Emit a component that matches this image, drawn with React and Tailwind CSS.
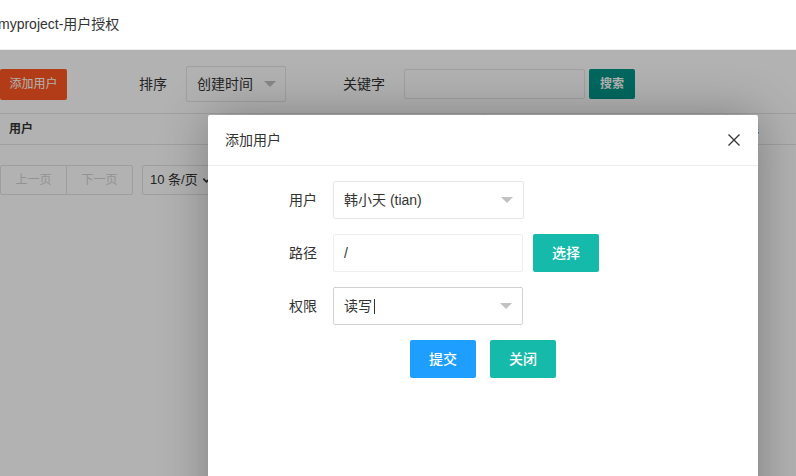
import { ChevronDown } from "lucide-react";

const FONT = "font-['Liberation_Sans','Noto_Sans_CJK_SC',sans-serif]";

function Caret() {
  return (
    <span className="block w-0 h-0 border-x-[6px] border-x-transparent border-t-[6px] border-t-[#c2c2c2]" />
  );
}

function Background() {
  return (
    <div className="text-[#333]">
      {/* toolbar */}
      <div className="flex items-center h-[36px] mt-[16px]">
        <button className="h-[31px] w-[67px] bg-[#FF5722] text-white text-[12px] rounded-[2px]">添加用户</button>
        <span className="ml-[72px] text-[14px]">排序</span>
        <div className="ml-[19px] w-[100px] h-[36px] border border-[#e6e6e6] rounded-[2px] flex items-center justify-between pl-[10px] pr-[9px] text-[14px]">
          <span>创建时间</span>
          <Caret />
        </div>
        <span className="ml-[57px] text-[14px]">关键字</span>
        <div className="ml-[19px] w-[181px] h-[30px] border border-[#e6e6e6] rounded-[2px]" />
        <button className="ml-[4px] w-[46px] h-[30px] bg-[#009688] text-white text-[12px] font-bold rounded-[2px]">搜索</button>
      </div>

      {/* table header */}
      <div className="mt-[11px] flex h-[32px] border-y border-[#e6e6e6] text-[12px] font-bold">
        <div className="w-[483px] flex items-center pl-[9px]">用户</div>
        <div className="w-[243px] flex items-center pl-[15px] border-l border-[#e6e6e6]">路径</div>
        <div className="flex-1 flex items-center pl-[8px] border-l border-[#e6e6e6]">权限</div>
      </div>

      {/* pagination */}
      <div className="mt-[20px] flex items-center text-[12px]">
        <div className="flex h-[30px] border border-[#e2e2e2] rounded-[2px]">
          <span className="w-[65px] flex items-center justify-center text-[#d2d2d2]">上一页</span>
          <span className="w-[66px] flex items-center justify-center text-[#d2d2d2] border-l border-[#e2e2e2]">下一页</span>
        </div>
        <div className="ml-[9px] h-[30px] w-[90px] border border-[#e2e2e2] rounded-[2px] flex items-center pl-[7px] text-[13px]">
          <span>10 条/页</span>
          <ChevronDown className="w-[11px] h-[11px] ml-[3px]" strokeWidth={3.5} />
        </div>
      </div>
    </div>
  );
}

function Row({ label, children }) {
  return (
    <div className="flex items-center h-[38px] mb-[15px]">
      <label className="w-[125px] text-right text-[14px] text-[#333] pr-[16px]">{label}</label>
      {children}
    </div>
  );
}

function Modal() {
  return (
    <div className="absolute left-[208px] top-[115px] w-[550px] h-[420px] bg-white rounded-[2px] shadow-[1px_1px_50px_rgba(0,0,0,0.3)]">
      <div className="h-[51px] border-b border-[#eee] flex items-center justify-between pl-[17px] pr-[17px] text-[14px] text-[#333]">
        <span>添加用户</span>
        <svg width="12" height="12" viewBox="0 0 12 12" className="mr-[1px]">
          <path d="M0.5 0.5 L11.5 11.5 M11.5 0.5 L0.5 11.5" stroke="#333" strokeWidth="1.3" />
        </svg>
      </div>
      <div className="pt-[15px]">
        <Row label="用户">
          <div className="w-[191px] h-[38px] border border-[#e6e6e6] rounded-[2px] flex items-center justify-between pl-[10px] pr-[10px] text-[14px] text-[#333]">
            <span>韩小天 (tian)</span>
            <Caret />
          </div>
        </Row>
        <Row label="路径">
          <div className="w-[190px] h-[38px] border border-[#eee] rounded-[2px] flex items-center pl-[10px] text-[14px] text-[#333]">/</div>
          <button className="ml-[10px] w-[66px] h-[38px] bg-[#16baaa] text-white text-[14px] font-medium rounded-[2px]">选择</button>
        </Row>
        <Row label="权限">
          <div className="w-[190px] h-[38px] border border-[#d2d2d2] rounded-[2px] flex items-center justify-between pl-[10px] pr-[10px] text-[14px] text-[#333]">
            <span className="flex items-center">
              读写
              <span className="ml-[2px] inline-block w-[1px] h-[15px] bg-[#333]" />
            </span>
            <Caret />
          </div>
        </Row>
        <div className="flex pl-[202px] gap-[14px]">
          <button className="w-[66px] h-[38px] bg-[#1e9fff] text-white text-[14px] font-medium rounded-[2px]">提交</button>
          <button className="w-[66px] h-[38px] bg-[#16baaa] text-white text-[14px] font-medium rounded-[2px]">关闭</button>
        </div>
      </div>
    </div>
  );
}

export default function App() {
  return (
    <div className={`relative w-[796px] h-[476px] overflow-hidden bg-white ${FONT}`}>
      <div className="h-[50px] border-b border-[#eee] flex items-center text-[14px] text-[#333]">
        <span className="-ml-[2px] -mt-[1px]">myproject-用户授权</span>
      </div>
      <Background />
      <div className="absolute left-0 right-0 top-[50px] bottom-0 bg-black/30" />
      <Modal />
    </div>
  );
}
